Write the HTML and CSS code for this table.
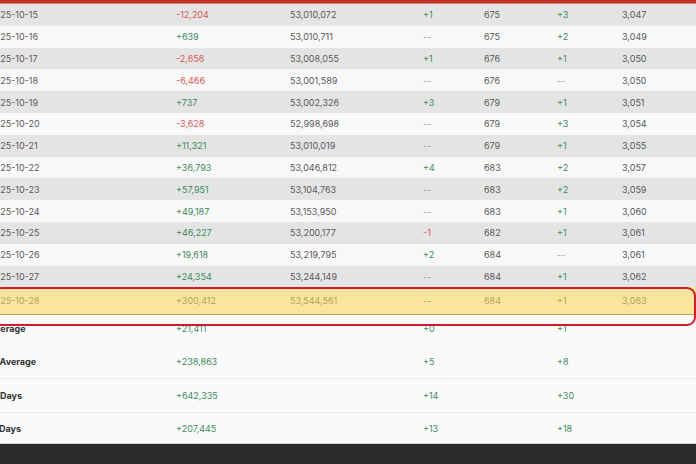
FILE: index.html
```html
<!DOCTYPE html>
<html>
<head>
<meta charset="utf-8">
<link rel="stylesheet" href="styles.css">
</head>
<body>
<div class="page">
  <div class="topbar"></div>
  <div class="table">
    <div class="row odd"><span>2025-10-15</span><span class="neg">-12,204</span><span>53,010,072</span><span class="pos">+1</span><span>675</span><span class="pos">+3</span><span>3,047</span></div>
    <div class="row"><span>2025-10-16</span><span class="pos">+639</span><span>53,010,711</span><span class="dash">--</span><span>675</span><span class="pos">+2</span><span>3,049</span></div>
    <div class="row odd"><span>2025-10-17</span><span class="neg">-2,656</span><span>53,008,055</span><span class="pos">+1</span><span>676</span><span class="pos">+1</span><span>3,050</span></div>
    <div class="row"><span>2025-10-18</span><span class="neg">-6,466</span><span>53,001,589</span><span class="dash">--</span><span>676</span><span class="dash">--</span><span>3,050</span></div>
    <div class="row odd"><span>2025-10-19</span><span class="pos">+737</span><span>53,002,326</span><span class="pos">+3</span><span>679</span><span class="pos">+1</span><span>3,051</span></div>
    <div class="row"><span>2025-10-20</span><span class="neg">-3,628</span><span>52,998,698</span><span class="dash">--</span><span>679</span><span class="pos">+3</span><span>3,054</span></div>
    <div class="row odd"><span>2025-10-21</span><span class="pos">+11,321</span><span>53,010,019</span><span class="dash">--</span><span>679</span><span class="pos">+1</span><span>3,055</span></div>
    <div class="row"><span>2025-10-22</span><span class="pos">+36,793</span><span>53,046,812</span><span class="pos">+4</span><span>683</span><span class="pos">+2</span><span>3,057</span></div>
    <div class="row odd"><span>2025-10-23</span><span class="pos">+57,951</span><span>53,104,763</span><span class="dash">--</span><span>683</span><span class="pos">+2</span><span>3,059</span></div>
    <div class="row"><span>2025-10-24</span><span class="pos">+49,187</span><span>53,153,950</span><span class="dash">--</span><span>683</span><span class="pos">+1</span><span>3,060</span></div>
    <div class="row odd"><span>2025-10-25</span><span class="pos">+46,227</span><span>53,200,177</span><span class="neg">-1</span><span>682</span><span class="pos">+1</span><span>3,061</span></div>
    <div class="row"><span>2025-10-26</span><span class="pos">+19,618</span><span>53,219,795</span><span class="pos">+2</span><span>684</span><span class="dash">--</span><span>3,061</span></div>
    <div class="row odd"><span>2025-10-27</span><span class="pos">+24,354</span><span>53,244,149</span><span class="dash">--</span><span>684</span><span class="pos">+1</span><span>3,062</span></div>
    <div class="row today"><span>2025-10-28</span><span>+300,412</span><span>53,544,561</span><span>--</span><span>684</span><span>+1</span><span>3,063</span></div>
    <div class="summary">
      <div class="srow s1"><span class="label">Average</span><span class="pos">+21,411</span><span></span><span class="pos">+0</span><span></span><span class="pos">+1</span><span></span></div>
      <div class="srow s2"><span class="label">7d Average</span><span class="pos">+238,863</span><span></span><span class="pos">+5</span><span></span><span class="pos">+8</span><span></span></div>
      <div class="srow s3"><span class="label">30 Days</span><span class="pos">+642,335</span><span></span><span class="pos">+14</span><span></span><span class="pos">+30</span><span></span></div>
      <div class="srow s4"><span class="label">60 Days</span><span class="pos">+207,445</span><span></span><span class="pos">+13</span><span></span><span class="pos">+18</span><span></span></div>
    </div>
    <div class="highlight-box"></div>
  </div>
  <div class="footer"></div>
</div>
</body>
</html>
```

FILE: styles.css
```css
html, body {
  margin: 0;
  padding: 0;
  background: #fafafa;
  overflow: hidden;
}
body {
  width: 696px;
  height: 464px;
  font-family: Inter, "Noto Sans", "Liberation Sans", sans-serif;
  font-size: 9px;
  color: #5a5a5a;
}
.page {
  display: flex;
  flex-direction: column;
  height: 464px;
  overflow: hidden;
}
.topbar {
  height: 3px;
  background: #bf3426;
  border-bottom: 1px solid #e07a70;
  flex: none;
}
.table {
  position: relative;
  margin-left: -11px;
  width: 707px;
  flex: none;
}
.row, .srow {
  display: grid;
  grid-template-columns: 187px 114px 133px 61px 73px 65px 1fr;
  align-items: center;
}
.row {
  height: 21.8px;
  background: #f8f8f8;
}
.row.odd {
  background: #e4e4e4;
}
.row.today {
  height: 27px;
  background: #fbe59d;
  border-bottom: 1px solid #c9a050;
  color: #b3a35a;
}
.pos { color: #3d8b5e; }
.neg { color: #d55a5a; }
.dash { color: #a0a0a0; }
.summary {
  background: #fafafa;
}
.srow {
  border-bottom: 1px solid #e8e8e8;
}
.srow.s1 { height: 27px; border-bottom: none; padding-bottom: 3px; }
.srow.s2 { height: 33px; }
.srow.s3 { height: 33px; }
.srow.s4 { height: 30px; border-bottom: none; }
.label {
  font-weight: 700;
  color: #333;
}
.s2 .label { text-indent: -2px; }
.s3 .label { text-indent: -3px; }
.s4 .label { text-indent: -4px; }
.highlight-box {
  position: absolute;
  left: 4px;
  right: 0;
  top: 283px;
  height: 35px;
  border: 2px solid #cf1c28;
  border-radius: 9px;
  pointer-events: none;
}
.footer {
  flex: 1;
  background: #2b2b2b;
  border-top: 1px solid #d8d8d8;
}
```
